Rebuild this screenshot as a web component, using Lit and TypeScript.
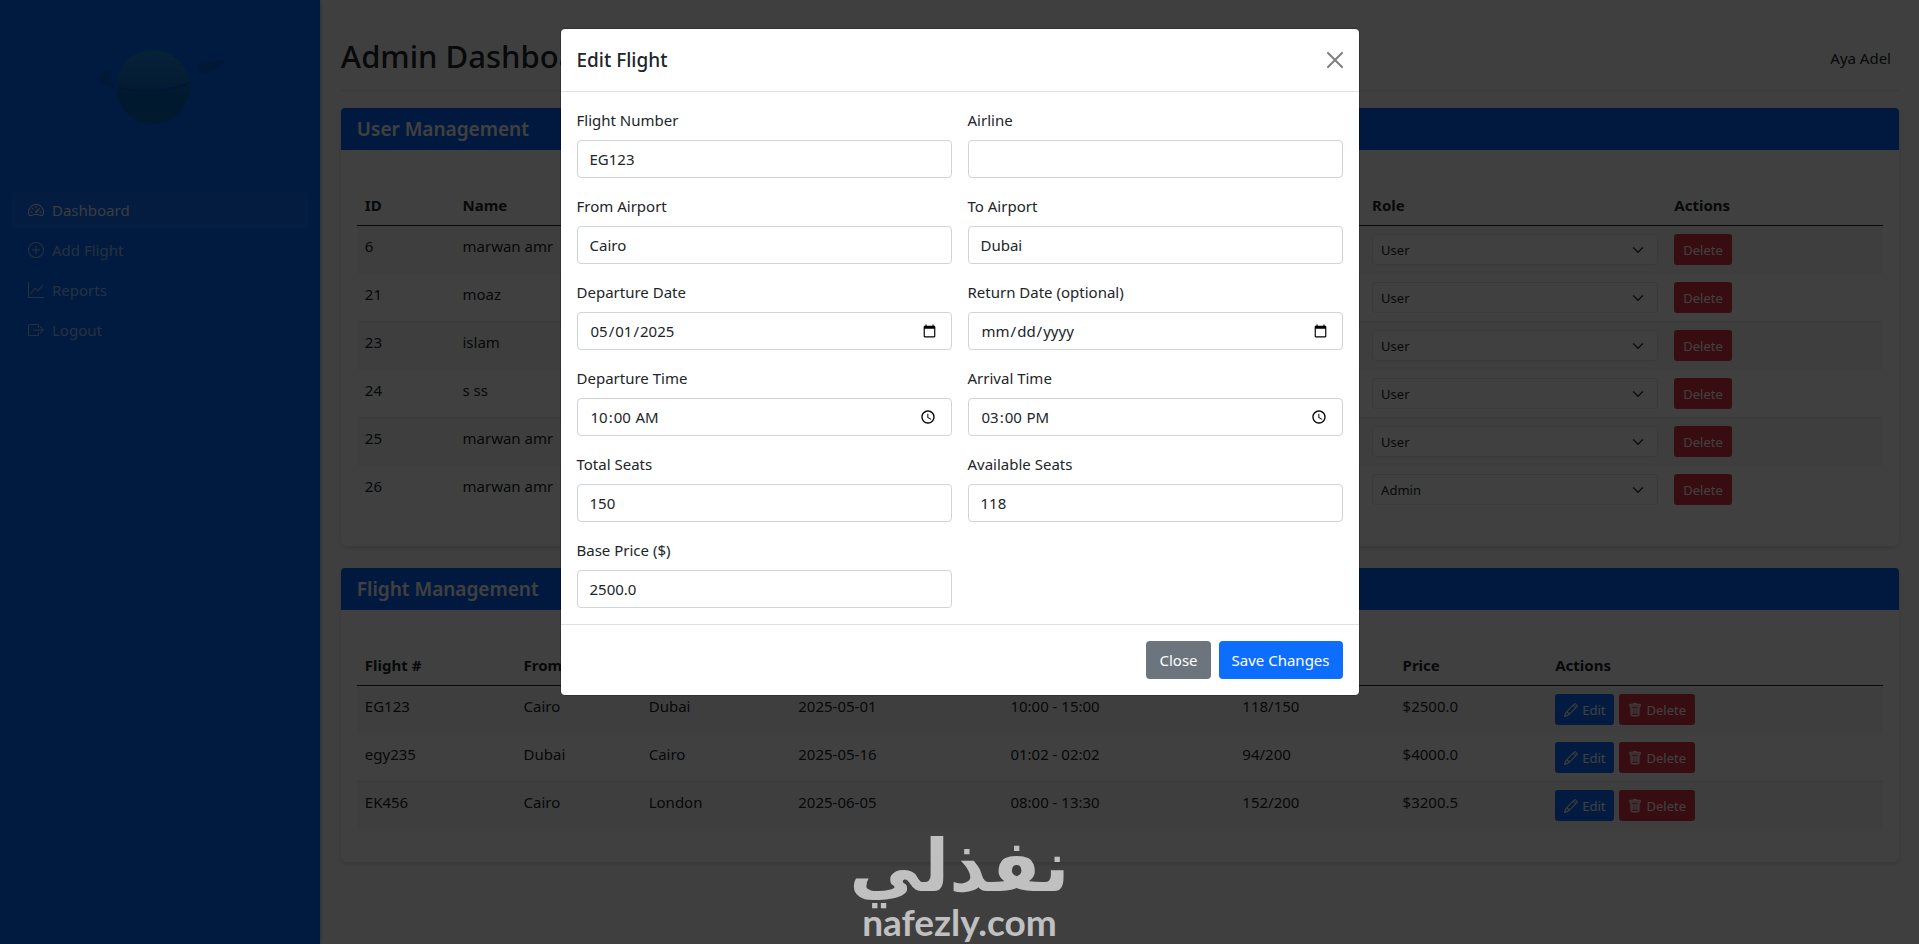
import { LitElement, html, css, svg } from "lit";
import { customElement } from "lit/decorators.js";

const icons = {
  speedometer: svg`<path d="M8 4a.5.5 0 0 1 .5.5V6a.5.5 0 0 1-1 0V4.500A.5.5 0 0 1 8 4M3.732 5.732a.5.5 0 0 1 .707 0l.915.914a.5.5 0 1 1-.708.708l-.914-.915a.5.5 0 0 1 0-.707M2 10a.5.5 0 0 1 .5-.5h1.586a.5.5 0 0 1 0 1H2.500A.5.5 0 0 1 2 10m9.500 0a.5.5 0 0 1 .5-.5h1.500a.5.5 0 0 1 0 1H12a.5.5 0 0 1-.5-.5m.754-4.246a.39.39 0 0 0-.527-.02L7.547 9.310a.910.910 0 1 0 1.302 1.258l3.434-4.297a.39.39 0 0 0-.029-.518z"/><path fill-rule="evenodd" d="M0 10a8 8 0 1 1 15.547 2.661c-.442 1.253-1.845 1.602-2.932 1.250C11.309 13.488 9.475 13 8 13c-1.474 0-3.310.488-4.615.911-1.087.352-2.490.003-2.932-1.250A8 8 0 0 1 0 10m8-7a7 7 0 0 0-6.603 9.329c.203.575.923.876 1.680.630C4.397 12.533 6.358 12 8 12s3.604.532 4.923.960c.757.245 1.477-.056 1.680-.631A7 7 0 0 0 8 3"/>`,
  plus: svg`<path d="M8 15A7 7 0 1 1 8 1a7 7 0 0 1 0 14m0 1A8 8 0 1 0 8 0a8 8 0 0 0 0 16"/><path d="M8 4a.5.5 0 0 1 .5.5v3h3a.5.5 0 0 1 0 1h-3v3a.5.5 0 0 1-1 0v-3h-3a.5.5 0 0 1 0-1h3v-3A.5.5 0 0 1 8 4"/>`,
  graph: svg`<path fill-rule="evenodd" d="M0 0h1v15h15v1H0zm14.817 3.113a.5.5 0 0 1 .07.704l-4.500 5.500a.5.5 0 0 1-.740.037L7.060 6.767l-3.656 5.027a.5.5 0 0 1-.808-.588l4-5.500a.5.5 0 0 1 .758-.060l2.609 2.610 4.150-5.073a.5.5 0 0 1 .704-.070"/>`,
  exit: svg`<path fill-rule="evenodd" d="M10 12.500a.5.5 0 0 1-.5.5h-8a.5.5 0 0 1-.5-.5v-9a.5.5 0 0 1 .5-.5h8a.5.5 0 0 1 .5.5v2a.5.5 0 0 0 1 0v-2A1.500 1.500 0 0 0 9.500 2h-8A1.500 1.500 0 0 0 0 3.500v9A1.500 1.500 0 0 0 1.500 14h8a1.500 1.500 0 0 0 1.500-1.500v-2a.5.5 0 0 0-1 0z"/><path fill-rule="evenodd" d="M15.854 8.354a.5.5 0 0 0 0-.708l-3-3a.5.5 0 0 0-.708.708L14.293 7.500H5.500a.5.5 0 0 0 0 1h8.793l-2.147 2.146a.5.5 0 0 0 .708.708z"/>`,
  pencil: svg`<path stroke="currentColor" stroke-width=".3" d="M12.146.146a.5.5 0 0 1 .708 0l3 3a.5.5 0 0 1 0 .708l-10 10a.5.5 0 0 1-.168.110l-5 2a.5.5 0 0 1-.650-.650l2-5a.5.5 0 0 1 .110-.168zM11.207 2.500 13.500 4.793 14.793 3.500 12.500 1.207zm1.586 3L10.500 3.207 4 9.707V10h.5a.5.5 0 0 1 .5.5v.5h.5a.5.5 0 0 1 .5.5v.5h.293zm-9.761 5.175-.106.106-1.528 3.821 3.821-1.528.106-.106A.5.5 0 0 1 5 12.500V12h-.5a.5.5 0 0 1-.5-.5V11h-.5a.5.5 0 0 1-.468-.325"/>`,
  trash: svg`<path stroke="currentColor" stroke-width=".5" d="M5.500 5.500A.5.5 0 0 1 6 6v6a.5.5 0 0 1-1 0V6a.5.5 0 0 1 .5-.5m2.500 0a.5.5 0 0 1 .5.5v6a.5.5 0 0 1-1 0V6a.5.5 0 0 1 .5-.5m3 .5a.5.5 0 0 0-1 0v6a.5.5 0 0 0 1 0z"/><path stroke="currentColor" stroke-width=".4" d="M14.500 3a1 1 0 0 1-1 1H13v9a2 2 0 0 1-2 2H5a2 2 0 0 1-2-2V4h-.5a1 1 0 0 1-1-1V2a1 1 0 0 1 1-1H6a1 1 0 0 1 1-1h2a1 1 0 0 1 1 1h3.500a1 1 0 0 1 1 1zM4.118 4 4 4.059V13a1 1 0 0 0 1 1h6a1 1 0 0 0 1-1V4.059L11.882 4zM2.500 3h11V2h-11z"/>`,
  close: svg`<path d="M.293.293a1 1 0 0 1 1.414 0L8 6.586 14.293.293a1 1 0 1 1 1.414 1.414L9.414 8l6.293 6.293a1 1 0 0 1-1.414 1.414L8 9.414l-6.293 6.293a1 1 0 0 1-1.414-1.414L6.586 8 .293 1.707a1 1 0 0 1 0-1.414"/>`,
};

const icon = (name: keyof typeof icons) =>
  html`<svg class="icon" viewBox="0 0 16 16" fill="currentColor" aria-hidden="true">${icons[name]}</svg>`;

const nav: { label: string; icon: keyof typeof icons; active?: boolean }[] = [
  { label: "Dashboard", icon: "speedometer", active: true },
  { label: "Add Flight", icon: "plus" },
  { label: "Reports", icon: "graph" },
  { label: "Logout", icon: "exit" },
];

const users = [
  { id: 6, name: "marwan amr", role: "User" },
  { id: 21, name: "moaz", role: "User" },
  { id: 23, name: "islam", role: "User" },
  { id: 24, name: "s ss", role: "User" },
  { id: 25, name: "marwan amr", role: "User" },
  { id: 26, name: "marwan amr", role: "Admin" },
];

const flights = [
  ["EG123", "Cairo", "Dubai", "2025-05-01", "10:00 - 15:00", "118/150", "$2500.0"],
  ["egy235", "Dubai", "Cairo", "2025-05-16", "01:02 - 02:02", "94/200", "$4000.0"],
  ["EK456", "Cairo", "London", "2025-06-05", "08:00 - 13:30", "152/200", "$3200.5"],
];

const fields = [
  { id: "number", label: "Flight Number", type: "text", value: "EG123" },
  { id: "airline", label: "Airline", type: "text", value: "" },
  { id: "from", label: "From Airport", type: "text", value: "Cairo" },
  { id: "to", label: "To Airport", type: "text", value: "Dubai" },
  { id: "departure-date", label: "Departure Date", type: "date", value: "2025-05-01" },
  { id: "return-date", label: "Return Date (optional)", type: "date", value: "" },
  { id: "departure-time", label: "Departure Time", type: "time", value: "10:00" },
  { id: "arrival-time", label: "Arrival Time", type: "time", value: "15:00" },
  { id: "total-seats", label: "Total Seats", type: "number", value: "150" },
  { id: "available-seats", label: "Available Seats", type: "number", value: "118" },
  { id: "price", label: "Base Price ($)", type: "number", value: "2500.0" },
];

@customElement("app-root")
export class AppRoot extends LitElement {
  static styles = css`
    :host {
      display: block;
      font: 15px/24px "Noto Sans", "Open Sans", sans-serif;
      color: #212529;
    }
    *, *::before, *::after { box-sizing: border-box; }
    h1, h2, h3 { margin: 0; }
    button, input, select { font: inherit; color: inherit; }
    .icon { width: 1em; height: 1em; flex: none; }

    .page {
      display: grid;
      grid-template-columns: 1fr 5fr;
      min-height: 100vh;
      background: #fcfcfc;
    }
    .sidebar {
      background: #0468fb;
      padding: 40px 12px 0;
      box-shadow: 0 0 4px rgba(0, 0, 0, .4);
    }
    .logo { display: block; width: 144px; height: 96px; margin: 0 auto; }
    .nav {
      display: flex;
      flex-direction: column;
      gap: 4px;
      margin-top: 56px;
    }
    .nav-link {
      display: flex;
      align-items: center;
      gap: 8px;
      height: 36px;
      padding: 0 16px;
      border-radius: 4px;
      color: rgba(255, 255, 255, .6);
      text-decoration: none;
    }
    .nav-link .icon { font-size: 16px; }
    .nav-link.active { color: rgba(255, 255, 255, .9); background: rgba(255, 255, 255, .06); }

    .main { padding: 24px 20px 24px 21px; min-width: 0; }
    .topbar {
      display: flex;
      align-items: center;
      justify-content: space-between;
      padding: 8px 8px 6px 0;
      height: 67px;
      border-bottom: 1px solid #dee2e6;
      margin-bottom: 17px;
    }
    .topbar h1 { font-size: 31px; font-weight: 500; line-height: 40px; padding-bottom: 4px; }
    .card {
      background: #fff;
      border-radius: 6px;
      box-shadow: 0 2px 5px rgba(0, 0, 0, .15);
      margin-bottom: 22px;
    }
    .card-title {
      padding: 8px 16px;
      background: #0565f5;
      color: #fff;
      border-radius: 4px 4px 0 0;
      font-size: 19px;
      font-weight: 600;
      line-height: 26px;
    }
    .card-body { padding: 35px 16px 32px; }
    table { width: 100%; border-collapse: separate; border-spacing: 0; table-layout: fixed; }
    th, td { text-align: left; vertical-align: top; padding: 8px; }
    th { font-weight: 700; height: 41px; border-bottom: 1px solid #212529; }
    td { height: 48px; }
    tbody tr:nth-child(odd) td { background: #f8f8f8; }
    tbody tr:nth-child(even) td { border-bottom: 1px solid #dee2e6; }
    tbody tr:last-child td { border-bottom: 0; }
    .c-id { width: 6.4%; } .c-name { width: 59.6%; } .c-role { width: 19.8%; }
    .f-num { width: 10.4%; } .f-from { width: 8.2%; } .f-to { width: 9.8%; } .f-date { width: 13.9%; }
    .f-time { width: 15.2%; } .f-seat { width: 10.5%; } .f-price { width: 10%; }

    .select { display: grid; align-items: center; width: 100%; max-width: 286px; }
    .select select, .select svg { grid-area: 1 / 1; }
    .select select {
      appearance: none;
      width: 100%;
      height: 31px;
      padding: 0 8px;
      font-size: 13px;
      background: #fff;
      border: 1px solid #dee2e6;
      border-radius: 4px;
    }
    .select svg { justify-self: end; width: 12px; height: 12px; margin-right: 14px; pointer-events: none; }
    .actions { display: flex; gap: 5px; }
    .btn {
      display: inline-flex;
      align-items: center;
      justify-content: center;
      gap: 4px;
      height: 38px;
      padding: 0 13px;
      border: 0;
      border-radius: 4px;
      color: #fff;
      white-space: nowrap;
    }
    .btn.small { height: 31px; padding: 0 9px; font-size: 13px; border-radius: 3px; }
    .btn.small .icon { font-size: 14px; }
    .primary { background: #0d6efd; }
    .danger { background: #dc3545; }
    .secondary { background: #6c757d; }

    .overlay {
      position: absolute;
      inset: 0;
      background: rgba(0, 0, 0, .75);
      padding: 28px 16px;
    }
    .modal {
      width: 100%;
      max-width: 800px;
      margin: 0 auto;
      background: #fff;
      background-clip: padding-box;
      border: 1px solid rgba(0, 0, 0, .2);
      border-radius: 5px;
    }
    .modal-head {
      display: flex;
      align-items: center;
      justify-content: space-between;
      padding: 16px;
      border-bottom: 1px solid #dee2e6;
    }
    .modal-head h2 { font-size: 19px; font-weight: 500; line-height: 30px; }
    .close { display: flex; padding: 0; border: 0; background: none; color: #7f7f7f; font-size: 16px; }
    .modal-body { display: grid; grid-template-columns: 1fr 1fr; gap: 16px; padding: 16px; }
    .field { display: flex; flex-direction: column; gap: 8px; min-width: 0; }
    .field input {
      width: 100%;
      height: 38px;
      padding: 6px 12px;
      background: #fff;
      border: 1px solid #ced4da;
      border-radius: 4px;
      appearance: textfield;
    }
    .field input::-webkit-inner-spin-button { display: none; }
    .modal-foot { display: flex; justify-content: flex-end; gap: 8px; padding: 16px; border-top: 1px solid #dee2e6; }

    .watermark {
      position: absolute;
      left: 0;
      right: 0;
      bottom: 0;
      padding-bottom: 4px;
      text-align: center;
      color: #c0c0c0;
      pointer-events: none;
    }
    .mark-ar { font: 700 72px/76px "DejaVu Sans", sans-serif; }
    .mark-en { font: 700 37px/36px Lato, sans-serif; }
  `;

  render() {
    return html`
      <div class="page">
        <aside class="sidebar">
          <svg class="logo" viewBox="0 0 144 96" aria-hidden="true">
            <defs>
              <linearGradient id="globe" x1="0" y1="0" x2="0" y2="1">
                <stop offset="0" stop-color="#1c88dc" />
                <stop offset=".5" stop-color="#0c70cc" />
                <stop offset=".6" stop-color="#0664bc" />
                <stop offset="1" stop-color="#0468b8" />
              </linearGradient>
            </defs>
            <circle cx="65" cy="47" r="37" fill="url(#globe)" />
            <path d="M28 46q34 10 74-4-6 8-34 10-30 2-40-6z" fill="#0458c8" />
            <path d="M28 48q-14-2-17-10 2-6 14-8-8 8 3 18z" fill="#0562dc" />
            <path d="M108 26q16-6 28-6-4 12-28 14 8-6 0-8z" fill="#0562dc" />
          </svg>
          <nav class="nav">
            ${nav.map(
              (n) => html`<a class="nav-link ${n.active ? "active" : ""}" href="#">${icon(n.icon)}<span>${n.label}</span></a>`
            )}
          </nav>
        </aside>
        <main class="main">
          <header class="topbar"><h1>Admin Dashboard</h1><span>Aya Adel</span></header>
          <section class="card">
            <h2 class="card-title">User Management</h2>
            <div class="card-body">
              <table>
                <thead>
                  <tr><th class="c-id">ID</th><th class="c-name">Name</th><th class="c-role">Role</th><th>Actions</th></tr>
                </thead>
                <tbody>
                  ${users.map(
                    (u) => html`<tr>
                      <td>${u.id}</td>
                      <td>${u.name}</td>
                      <td>
                        <div class="select">
                          <select aria-label="Role">
                            <option ?selected=${u.role === "User"}>User</option>
                            <option ?selected=${u.role === "Admin"}>Admin</option>
                          </select>
                          <svg viewBox="0 0 16 16" fill="none" stroke="#343a40" stroke-width="2" stroke-linecap="round" stroke-linejoin="round" aria-hidden="true"><path d="m2 5 6 6 6-6" /></svg>
                        </div>
                      </td>
                      <td><div class="actions"><button class="btn small danger">Delete</button></div></td>
                    </tr>`
                  )}
                </tbody>
              </table>
            </div>
          </section>
          <section class="card">
            <h2 class="card-title">Flight Management</h2>
            <div class="card-body">
              <table>
                <thead>
                  <tr>
                    <th class="f-num">Flight #</th><th class="f-from">From</th><th class="f-to">To</th>
                    <th class="f-date">Date</th><th class="f-time">Time</th><th class="f-seat">Seats</th>
                    <th class="f-price">Price</th><th>Actions</th>
                  </tr>
                </thead>
                <tbody>
                  ${flights.map(
                    (f) => html`<tr>
                      ${f.map((c) => html`<td>${c}</td>`)}
                      <td>
                        <div class="actions">
                          <button class="btn small primary">${icon("pencil")}Edit</button>
                          <button class="btn small danger">${icon("trash")}Delete</button>
                        </div>
                      </td>
                    </tr>`
                  )}
                </tbody>
              </table>
            </div>
          </section>
        </main>
      </div>
      <div class="overlay">
        <form class="modal" role="dialog" aria-labelledby="modal-title" @submit=${(e: Event) => e.preventDefault()}>
          <div class="modal-head">
            <h2 id="modal-title">Edit Flight</h2>
            <button class="close" type="button" aria-label="Close">${icon("close")}</button>
          </div>
          <div class="modal-body">
            ${fields.map(
              (f) => html`<div class="field">
                <label for=${f.id}>${f.label}</label>
                <input id=${f.id} type=${f.type} step="any" .value=${f.value} />
              </div>`
            )}
          </div>
          <div class="modal-foot">
            <button class="btn secondary" type="button">Close</button>
            <button class="btn primary" type="submit">Save Changes</button>
          </div>
        </form>
      </div>
      <div class="watermark">
        <div class="mark-ar" lang="ar" dir="rtl">نفذلي</div>
        <div class="mark-en">nafezly.com</div>
      </div>
    `;
  }
}
